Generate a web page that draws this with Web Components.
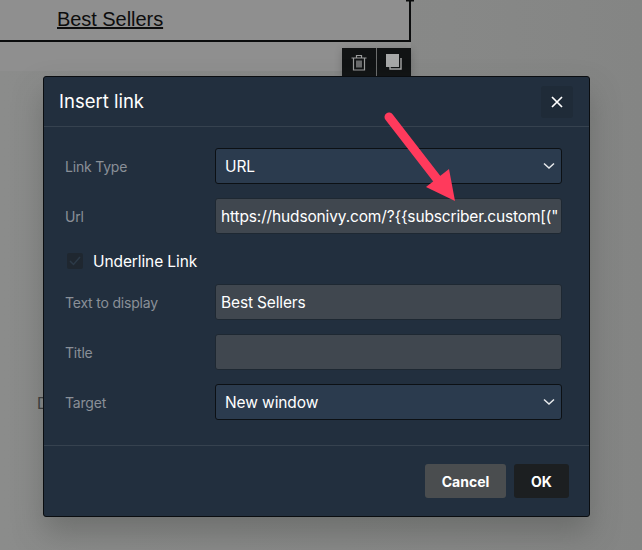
<!DOCTYPE html>
<html>
<head>
<meta charset="utf-8">
<title>Insert link</title>
<style>
  html, body { margin: 0; height: 100%; overflow: hidden; background: #888988; }
</style>
</head>
<body>
<editor-backdrop>
  <link-dialog>
    <form-row label="Link Type"><select-box value="URL"></select-box></form-row>
    <form-row label="Url"><text-box value="https://hudsonivy.com/?{{subscriber.custom[(&quot;"></text-box></form-row>
    <check-row label="Underline Link"></check-row>
    <form-row label="Text to display"><text-box value="Best Sellers"></text-box></form-row>
    <form-row label="Title"><text-box value=""></text-box></form-row>
    <form-row label="Target"><select-box value="New window"></select-box></form-row>
  </link-dialog>
  <svg class="arrow" slot="over" width="642" height="550">
    <path d="M389 117L437 179" stroke="#ff3a5c" stroke-width="9" stroke-linecap="round"/>
    <path d="M426 187L449 169L455 201Z" fill="#ff3a5c"/>
  </svg>
</editor-backdrop>

<script>
class EditorBackdrop extends HTMLElement {
    constructor() {
        super();
        this.attachShadow({ mode: 'open' });
    }
    connectedCallback() {
        this.shadowRoot.innerHTML = `
            <style>
                :host { display: block; position: relative; width: 642px; height: 550px; overflow: hidden;
                    font-family: Inter, "Liberation Sans", sans-serif;
                    background: linear-gradient(90deg, #8b8c8b 0, #878887 70%, #848584 100%); }
                .canvas { height: 71px; width: 411px; background: #8f8f8f; box-sizing: border-box; position: relative; }
                .block { height: 42px; width: 411px; box-sizing: border-box; border-right: 2px solid #0b0c0d; border-bottom: 2px solid #0b0c0d; padding: 6px 0 0 57px; }
                a { font: 20px/26px "Liberation Sans", Arial, sans-serif; color: #0d0d0d; text-decoration: underline; letter-spacing: -.05px; }
                .stray { position: absolute; left: 37px; top: 394px; font: 16px/20px "Liberation Sans", sans-serif; color: #3c3d3d; }
                .tools { position: absolute; left: 342px; top: 48px; display: flex; gap: 1px; height: 28px; background: #6c6d6d; box-shadow: 0 2px 8px rgba(0,0,0,.2); }
                .tools span { width: 34px; display: flex; align-items: center; justify-content: center; background: #111314; }
                svg { display: block; }
                ::slotted(svg) { position: absolute; left: 0; top: 0; pointer-events: none; }
            </style>
            <div class="canvas">
                <div class="block"><a>Best Sellers</a></div>
                <svg style="position:absolute;left:404px;top:-3px" width="12" height="6"><path d="M2 3.500h8" stroke="#0b0c0d" stroke-width="2"/></svg>
            </div>
            <div class="stray">D</div>
            <div class="tools">
                <span><svg width="16" height="17" viewBox="0 0 16 17" fill="none" stroke="#9b9c9c" stroke-width="1.200">
                    <path d="M.500 4h15M5.500 4V1.500h5V4M2.500 4v12h11V4"/><path d="M6 6.500v7M8 6.500v7M10 6.500v7" stroke-width="1.300"/></svg></span>
                <span><svg width="16" height="16" viewBox="0 0 16 16" fill="none">
                    <rect x="0" y="0" width="13" height="13" fill="#a7a8a8"/><path d="M15 4v11H4v-2" stroke="#a7a8a8" stroke-width="1.400"/></svg></span>
            </div>
            <slot></slot>
            <slot name="over"></slot>
        `;
    }
}

class LinkDialog extends HTMLElement {
    constructor() {
        super();
        this.attachShadow({ mode: 'open' });
    }
    connectedCallback() {
        this.shadowRoot.innerHTML = `
            <style>
                :host { display: flex; flex-direction: column; position: absolute; left: 43px; top: 76px; width: 547px; height: 441px;
                    box-sizing: border-box; background: #222f3e; border: 1px solid #0a0d10; border-radius: 3px;
                    box-shadow: 0 16px 30px rgba(60,62,60,.35); color: #fff; }
                header { height: 50px; box-sizing: border-box; flex: none; display: flex; align-items: center; justify-content: space-between;
                    padding: 0 16px 0 15px; border-bottom: 1px solid #36424f; }
                h1 { margin: 0 0 2px; font-size: 18.500px; font-weight: 400; color: #fff; }
                .close { width: 32px; height: 32px; border-radius: 3px; background: #1f2b38; display: flex; align-items: center; justify-content: center; }
                main { flex: 1; display: flex; flex-direction: column; padding: 21px 27px 0 21px; }
                footer { height: 71px; box-sizing: border-box; flex: none; border-top: 1px solid #36424f; display: flex; justify-content: flex-end; align-items: flex-start; gap: 8px; padding: 18px 20px 0 0; }
                button { height: 34px; border: 0; border-radius: 3px; font: 700 14px Inter, "Liberation Sans", sans-serif; color: #fff; padding: 0; }
                .cancel { width: 81px; background: #4a4d4f; }
                .ok { width: 55px; background: #1c1f21; }
            </style>
            <header>
                <h1>Insert link</h1>
                <div class="close"><svg width="12" height="12" viewBox="0 0 12 12"><path d="M1 1l10 10M11 1L1 11" stroke="#fff" stroke-width="1.700"/></svg></div>
            </header>
            <main><slot></slot></main>
            <footer><button class="cancel">Cancel</button><button class="ok">OK</button></footer>
        `;
    }
}

class FormRow extends HTMLElement {
    constructor() {
        super();
        this.attachShadow({ mode: 'open' });
    }
    connectedCallback() {
        this.shadowRoot.innerHTML = `
            <style>
                :host { display: grid; grid-template-columns: 150px 347px; align-items: center; height: 36px; flex: none; margin-bottom: 14px; }
                label { font-size: 14px; letter-spacing: -.2px; color: #8a9098; padding-top: 1px; }
            </style>
            <label>${this.getAttribute('label')}</label>
            <slot></slot>
        `;
    }
}

class SelectBox extends HTMLElement {
    constructor() {
        super();
        this.attachShadow({ mode: 'open' });
    }
    connectedCallback() {
        this.shadowRoot.innerHTML = `
            <style>
                :host { display: flex; align-items: center; justify-content: space-between; height: 36px; box-sizing: border-box;
                    background: #2b3b4e; border: 1px solid #0c1014; border-radius: 3px; padding: 0 6px 0 9px; color: #fff; font-size: 15.500px; letter-spacing: -.1px; }
            </style>
            <span>${this.getAttribute('value')}</span>
            <svg width="12" height="8" viewBox="0 0 12 8"><path d="M1 1.500l5 4.500 5-4.500" fill="none" stroke="#e8eaec" stroke-width="1.500"/></svg>
        `;
    }
}

class TextBox extends HTMLElement {
    constructor() {
        super();
        this.attachShadow({ mode: 'open' });
    }
    connectedCallback() {
        const value = this.getAttribute('value').replace(/"/g, '&quot;');
        this.shadowRoot.innerHTML = `
            <style>
                :host { display: flex; align-items: center; height: 36px; box-sizing: border-box; overflow: hidden; white-space: nowrap;
                    background: #40474f; border: 1px solid #1e2832; border-radius: 3px; padding: 0 5px; color: #fff; font-size: 15.500px; letter-spacing: -.15px; }
            </style>
            <span>${value}</span>
        `;
    }
}

class CheckRow extends HTMLElement {
    constructor() {
        super();
        this.attachShadow({ mode: 'open' });
    }
    connectedCallback() {
        this.shadowRoot.innerHTML = `
            <style>
                :host { display: flex; align-items: center; gap: 10px; height: 22px; flex: none; margin: 2px 0 12px 2px; color: #fff; font-size: 15.500px; letter-spacing: -.1px; }
                .box { width: 16px; height: 16px; background: #1f2730; border-radius: 2px; display: flex; align-items: center; justify-content: center; }
            </style>
            <span class="box"><svg width="12" height="10" viewBox="0 0 12 10"><path d="M1 5l3.500 3.500L11 1" fill="none" stroke="#2c3a48" stroke-width="1.500"/></svg></span>
            <span>${this.getAttribute('label')}</span>
        `;
    }
}

customElements.define('editor-backdrop', EditorBackdrop);
customElements.define('link-dialog', LinkDialog);
customElements.define('form-row', FormRow);
customElements.define('select-box', SelectBox);
customElements.define('text-box', TextBox);
customElements.define('check-row', CheckRow);
</script>
</body>
</html>
